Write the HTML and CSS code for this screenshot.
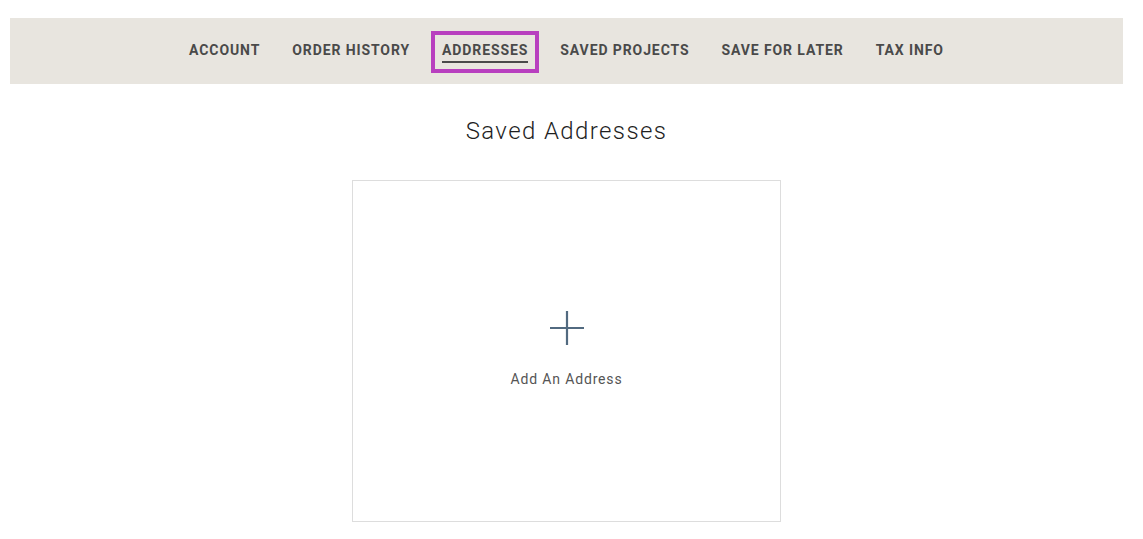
FILE: index.html
```html
<!DOCTYPE html>
<html lang="en">
<head>
    <meta charset="UTF-8">
    <meta name="viewport" content="width=device-width, initial-scale=1.0">
    <title>Saved Addresses</title>
    <link rel="stylesheet" href="styles.css">
</head>
<body>
    <!-- Account tabs -->
    <nav class="account-nav">
        <a class="nav-link" href="#"><span>Account</span></a>
        <a class="nav-link" href="#"><span>Order History</span></a>
        <a class="nav-link active" href="#"><span>Addresses</span></a>
        <a class="nav-link" href="#"><span>Saved Projects</span></a>
        <a class="nav-link" href="#"><span>Save For Later</span></a>
        <a class="nav-link" href="#"><span>Tax Info</span></a>
    </nav>

    <main class="content">
        <h1 class="page-title">Saved Addresses</h1>

        <div class="address-grid">
            <a class="add-card" href="#">
                <svg class="plus" width="36" height="36" viewBox="0 0 36 36">
                    <path d="M18 1v34M1 18h34" stroke="#526a80" stroke-width="2.2" fill="none"/>
                </svg>
                <span class="add-label">Add An Address</span>
            </a>
        </div>
    </main>
</body>
</html>
```

FILE: styles.css
```css
body {
    margin: 0;
    padding: 18px 20px 0 10px;
    font-family: Roboto, "Liberation Sans", sans-serif;
    color: #222;
    background: #fff;
}

.account-nav {
    background-color: #e8e5df;
    height: 64px;
    padding-top: 2px;
    display: flex;
    justify-content: center;
    align-items: center;
    gap: 10px;
}

.nav-link {
    font-size: 14px;
    font-weight: 700;
    text-transform: uppercase;
    letter-spacing: 0.9px;
    color: #4a4a4a;
    text-decoration: none;
    padding: 11px 11px 10px;
    line-height: 16px;
}

.nav-link span {
    display: inline-block;
    border-bottom: 2px solid transparent;
    padding-bottom: 3px;
}

.nav-link.active {
    outline: 4px solid #b83fbf;
    outline-offset: -4px;
}

.nav-link.active span {
    border-bottom-color: #4a4a4a;
}

.content {
    display: flex;
    flex-direction: column;
    align-items: center;
}

.page-title {
    font-size: 24px;
    font-weight: 300;
    letter-spacing: 1.4px;
    margin: 33px 0 35px;
    color: #1f1f1f;
}

.add-card {
    box-sizing: border-box;
    width: 429px;
    height: 342px;
    border: 1px solid #ddd;
    display: flex;
    flex-direction: column;
    align-items: center;
    justify-content: center;
    text-decoration: none;
    padding-bottom: 6px;
}

.add-label {
    margin-top: 25px;
    font-size: 14px;
    letter-spacing: 0.85px;
    color: #555;
}
```
